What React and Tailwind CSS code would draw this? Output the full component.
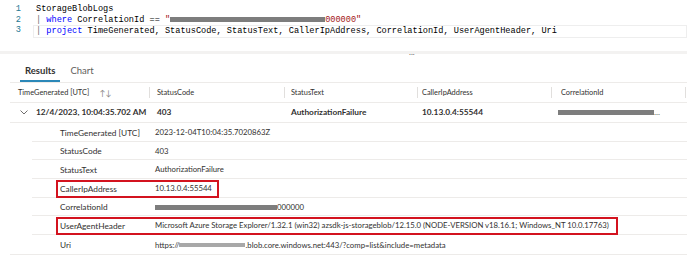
import React from 'react';

const Bar = ({ w, h = 'h-[5px]', light }) => (
  <span
    className={`inline-block align-middle ${h} ${light ? 'bg-[#a8a8a8]' : 'bg-[#7d7d7d]'}`}
    style={{ width: w }}
  />
);

const headers = [
  { label: 'TimeGenerated [UTC]', w: 'w-[140px]', pl: 'pl-[8px]', sort: true },
  { label: 'StatusCode', w: 'w-[135px]', pl: 'pl-[7px]' },
  { label: 'StatusText', w: 'w-[133px]', pl: 'pl-[6px]' },
  { label: 'CallerIpAddress', w: 'w-[134px]', pl: 'pl-[4px]' },
  { label: 'CorrelationId', w: 'w-[134px]', pl: 'pl-[9px]' },
];

const details = [
  { k: 'TimeGenerated [UTC]', v: '2023-12-04T10:04:35.7020863Z' },
  { k: 'StatusCode', v: '403' },
  { k: 'StatusText', v: 'AuthorizationFailure' },
  { k: 'CallerIpAddress', v: '10.13.0.4:55544', box: 'w-[163px]' },
  {
    k: 'CorrelationId',
    v: (
      <span className="flex items-center">
        <Bar w={122} />
        <span>000000</span>
      </span>
    ),
  },
  {
    k: 'UserAgentHeader',
    v: 'Microsoft Azure Storage Explorer/1.32.1 (win32) azsdk-js-storageblob/12.15.0 (NODE-VERSION v18.16.1; Windows_NT 10.0.17763)',
    box: 'w-[562px]',
  },
  {
    k: 'Uri',
    v: (
      <span className="flex items-center">
        <span>https://</span>
        <Bar w={66} h="h-[4px]" light />
        <span>.blob.core.windows.net:443/?comp=list&amp;include=metadata</span>
      </span>
    ),
  },
];

export default function App() {
  return (
    <div className="w-[687px] h-[255px] overflow-hidden bg-white text-[#323130] font-['Lato',sans-serif]">
      {/* query editor */}
      <div className="h-[51px] pt-[4px] font-['Liberation_Mono',monospace] text-[8.6px] leading-[10.5px] whitespace-pre">
        <div className="flex">
          <span className="w-[34px] pr-[13px] text-right text-[#237893]">1</span>
          <span className="pl-[2px] text-black">StorageBlobLogs</span>
        </div>
        <div className="flex">
          <span className="w-[34px] pr-[13px] text-right text-[#237893]">2</span>
          <span className="pl-[2px] text-black flex items-center">
            <span className="text-[#6e6e6e]">| </span>
            <span className="text-[#0000ff]">where</span>
            <span> CorrelationId == </span>
            <span className="text-[#a31515]">"</span>
            <Bar w={155} />
            <span className="text-[#a31515]">000000"</span>
          </span>
        </div>
        <div className="flex">
          <span className="w-[34px] pr-[13px] text-right text-[#237893]">3</span>
          <span className="flex-1 pl-[2px] text-black border border-[#eeeeee] -ml-px">
            <span className="text-[#6e6e6e]">| </span>
            <span className="text-[#0000ff]">project</span>
            <span> TimeGenerated, StatusCode, StatusText, CallerIpAddress, CorrelationId, UserAgentHeader, Uri</span>
          </span>
        </div>
      </div>

      {/* splitter */}
      <div className="h-[3px] bg-[#f3f2f1] flex items-center pl-[409px]">
        <span className="text-[8px] leading-none text-[#605e5c] -mt-[2px]">...</span>
      </div>

      {/* tabs */}
      <div className="ml-[10px] pt-[10px] flex border-b border-[#edebe9] text-[9.5px] leading-[14px]">
        <div className="ml-[10px] px-[5px] h-[18px] border-b-2 border-[#2b88b8] font-bold text-[#323130]">Results</div>
        <div className="ml-[5px] px-[5px] h-[18px] text-[#605e5c]">Chart</div>
      </div>

      {/* table */}
      <div className="ml-[10px] text-[7.75px]">
        <div className="flex h-[20px] border-b border-[#edebe9] text-[7.4px]">
          {headers.map((h) => (
            <div key={h.label} className={`${h.w} ${h.pl} flex items-center justify-between`}>
              <span className="flex items-center">
                {h.label}
                {h.sort && <span className="ml-[10px] text-[#8a8886] text-[8px]">↑↓</span>}
              </span>
              <span className="w-px h-[11px] bg-[#e1dfdd]" />
            </div>
          ))}
        </div>

        <div className="flex h-[20px] border-b border-[#edebe9] font-bold text-[8.3px]">
          <div className="w-[140px] flex items-center pl-[10px]">
            <svg width="8" height="5" viewBox="0 0 8 5" className="mr-[8px]">
              <path d="M0.5 0.5 L4 4 L7.5 0.5" fill="none" stroke="#605e5c" strokeWidth="0.9" />
            </svg>
            <span>12/4/2023, 10:04:35.702 AM</span>
          </div>
          <div className="w-[135px] flex items-center pl-[7px]">403</div>
          <div className="w-[133px] flex items-center pl-[6px]">AuthorizationFailure</div>
          <div className="w-[134px] flex items-center pl-[4px]">10.13.0.4:55544</div>
          <div className="w-[134px] flex items-center pl-[6px] font-normal">
            <Bar w={96} />
            <span className="text-[#605e5c]">...</span>
          </div>
        </div>

        <div className="border-b border-[#edebe9]">
          {details.map((d, i) => (
            <div
              key={d.k}
              className={`ml-[22px] h-[18.7px] flex ${i < details.length - 1 ? 'border-b border-[#edebe9]' : ''}`}
            >
              <div
                className={`ml-[24px] mt-px flex items-center border-2 ${
                  d.box ? `border-[#d3131f] ${d.box}` : 'border-transparent'
                } -my-px pl-[2px]`}
              >
                <span className="w-[95px] shrink-0 text-[8.3px]">{d.k}</span>
                <span className="whitespace-nowrap">{d.v}</span>
              </div>
            </div>
          ))}
        </div>
      </div>
    </div>
  );
}
